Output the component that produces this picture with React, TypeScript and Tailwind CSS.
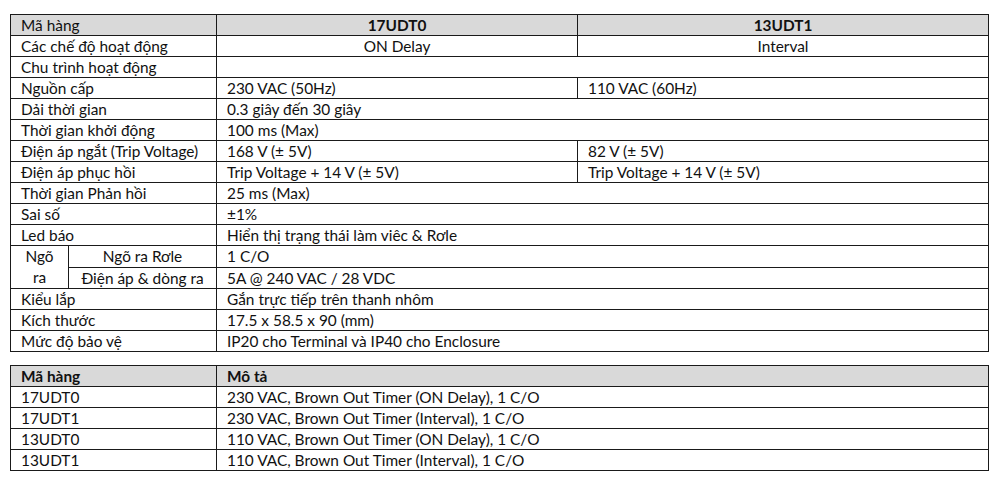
const specs: { label: string; a?: string; b?: string; span?: string; center?: boolean }[] = [
  { label: "Các chế độ hoạt động", a: "ON Delay", b: "Interval", center: true },
  { label: "Chu trình hoạt động", span: "" },
  { label: "Nguồn cấp", a: "230 VAC (50Hz)", b: "110 VAC (60Hz)" },
  { label: "Dải thời gian", span: "0.3 giây đến 30 giây" },
  { label: "Thời gian khởi động", span: "100 ms (Max)" },
  { label: "Điện áp ngắt (Trip Voltage)", a: "168 V (± 5V)", b: "82 V (± 5V)" },
  { label: "Điện áp phục hồi", a: "Trip Voltage + 14 V (± 5V)", b: "Trip Voltage + 14 V (± 5V)" },
  { label: "Thời gian Phản hồi", span: "25 ms (Max)" },
  { label: "Sai số", span: "±1%" },
  { label: "Led báo", span: "Hiển thị trạng thái làm viêc & Rơle" },
];

const specsAfter = [
  { label: "Kiểu lắp", span: "Gắn trực tiếp trên thanh nhôm" },
  { label: "Kích thước", span: "17.5 x 58.5 x 90 (mm)" },
  { label: "Mức độ bảo vệ", span: "IP20 cho Terminal và IP40 cho Enclosure" },
];

const models = [
  ["17UDT0", "230 VAC, Brown Out Timer (ON Delay), 1 C/O"],
  ["17UDT1", "230 VAC, Brown Out Timer (Interval), 1 C/O"],
  ["13UDT0", "110 VAC, Brown Out Timer (ON Delay), 1 C/O"],
  ["13UDT1", "110 VAC, Brown Out Timer (Interval), 1 C/O"],
];

const td = "border border-[#1a1a1a] h-[21px] px-[10px] pt-[1px] pb-0 leading-none whitespace-nowrap";

export default function App() {
  return (
    <div
      className="w-[1000px] h-[480px] bg-white text-[#111] text-[15.4px] pt-[14px] pl-[10px]"
      style={{ fontFamily: "Lato, 'Open Sans', sans-serif" }}
    >
      <table className="border-collapse table-fixed w-[978px]">
        <colgroup>
          <col className="w-[58px]" />
          <col className="w-[148px]" />
          <col className="w-[361px]" />
          <col className="w-[411px]" />
        </colgroup>
        <tbody>
          <tr className="bg-[#d9d9d9]">
            <td colSpan={2} className={td}>Mã hàng</td>
            <td className={`${td} text-center font-bold`}>17UDT0</td>
            <td className={`${td} text-center font-bold`}>13UDT1</td>
          </tr>
          {specs.map((r) => (
            <tr key={r.label}>
              <td colSpan={2} className={td}>{r.label}</td>
              {r.span !== undefined ? (
                <td colSpan={2} className={td}>{r.span}</td>
              ) : (
                <>
                  <td className={`${td} ${r.center ? "text-center" : ""}`}>{r.a}</td>
                  <td className={`${td} ${r.center ? "text-center" : ""}`}>{r.b}</td>
                </>
              )}
            </tr>
          ))}
          <tr>
            <td rowSpan={2} className="border border-[#1a1a1a] px-1 text-center leading-[21px]">
              Ngõ
              <br />
              ra
            </td>
            <td className={`${td} text-center`}>Ngõ ra Rơle</td>
            <td colSpan={2} className={td}>1 C/O</td>
          </tr>
          <tr>
            <td className={`${td} text-center`}>Điện áp &amp; dòng ra</td>
            <td colSpan={2} className={td}>5A @ 240 VAC / 28 VDC</td>
          </tr>
          {specsAfter.map((r) => (
            <tr key={r.label}>
              <td colSpan={2} className={td}>{r.label}</td>
              <td colSpan={2} className={td}>{r.span}</td>
            </tr>
          ))}
        </tbody>
      </table>

      <table className="border-collapse table-fixed w-[978px] mt-[13px]">
        <colgroup>
          <col className="w-[206px]" />
          <col className="w-[772px]" />
        </colgroup>
        <tbody>
          <tr className="bg-[#d9d9d9]">
            <td className={`${td} font-bold`}>Mã hàng</td>
            <td className={`${td} font-bold`}>Mô tả</td>
          </tr>
          {models.map(([code, desc]) => (
            <tr key={code}>
              <td className={td}>{code}</td>
              <td className={td}>{desc}</td>
            </tr>
          ))}
        </tbody>
      </table>
    </div>
  );
}
